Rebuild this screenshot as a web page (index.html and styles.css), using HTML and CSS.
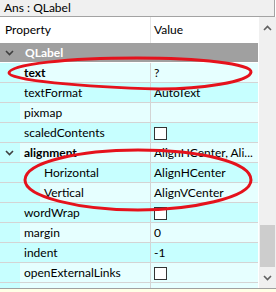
FILE: index.html
```html
<!DOCTYPE html>
<html>
<head>
<meta charset="utf-8">
<link rel="stylesheet" href="styles.css">
</head>
<body>
<div class="app">
  <div class="title">Ans : QLabel</div>
  <div class="main">
    <div class="view">
      <div class="header">
        <div class="hcell hprop">Property</div>
        <div class="hcell hval">Value</div>
      </div>
      <div class="group">
        <svg class="chev gchev" width="9" height="6" viewBox="0 0 9 6"><path d="M1 1 L4.5 4.5 L8 1" fill="none" stroke="#3f3f3f" stroke-width="1.6"/></svg>
        <span class="gname">QLabel</span>
      </div>
      <div class="row light"><div class="prop"><span class="branch b1"></span><span class="name bold">text</span></div><div class="val">?</div></div>
      <div class="row dark"><div class="prop"><span class="branch b1"></span><span class="name">textFormat</span></div><div class="val">AutoText</div></div>
      <div class="row light"><div class="prop"><span class="branch b1"></span><span class="name">pixmap</span></div><div class="val"></div></div>
      <div class="row dark"><div class="prop"><span class="branch b1"></span><span class="name">scaledContents</span></div><div class="val"><span class="check"></span></div></div>
      <div class="row light"><div class="prop"><span class="branch b1"><svg class="chev" width="9" height="6" viewBox="0 0 9 6"><path d="M1 1 L4.5 4.5 L8 1" fill="none" stroke="#404040" stroke-width="1.6"/></svg></span><span class="name bold">alignment</span></div><div class="val">AlignHCenter, Ali...</div></div>
      <div class="row dark"><div class="prop"><span class="branch b2"></span><span class="name">Horizontal</span></div><div class="val">AlignHCenter</div></div>
      <div class="row light"><div class="prop"><span class="branch b2"></span><span class="name">Vertical</span></div><div class="val">AlignVCenter</div></div>
      <div class="row dark"><div class="prop"><span class="branch b1"></span><span class="name">wordWrap</span></div><div class="val"><span class="check"></span></div></div>
      <div class="row light"><div class="prop"><span class="branch b1"></span><span class="name">margin</span></div><div class="val">0</div></div>
      <div class="row dark"><div class="prop"><span class="branch b1"></span><span class="name">indent</span></div><div class="val">-1</div></div>
      <div class="row light"><div class="prop"><span class="branch b1"></span><span class="name">openExternalLinks</span></div><div class="val"><span class="check"></span></div></div>
      <div class="row light"><div class="prop"><span class="branch b1"></span><span class="name"></span></div><div class="val"></div></div>
    </div>
    <div class="scroll">
      <div class="sbtn up"><svg width="9" height="6" viewBox="0 0 9 6"><path d="M1 5 L4.5 1.5 L8 5" fill="none" stroke="#606060" stroke-width="1.6"/></svg></div>
      <div class="track"><div class="thumb"></div></div>
      <div class="sbtn down"><svg width="9" height="6" viewBox="0 0 9 6"><path d="M1 1 L4.5 4.5 L8 1" fill="none" stroke="#606060" stroke-width="1.6"/></svg></div>
    </div>
  </div>
  <div class="bottom"></div>
  <svg class="marks" width="276" height="292" viewBox="0 0 276 292">
    <path d="M137 58 C200 58 252 64 251 72 C250 82 200 89 160 89 C80 87 9 80 9 73 C9 64 70 58 137 58 Z" fill="none" stroke="#e5121c" stroke-width="3"/>
    <path d="M138 150 C200 150 251 162 251 180 C251 198 190 210 138 210 C80 210 25 197 25 180 C25 162 80 150 138 150 Z" fill="none" stroke="#e5121c" stroke-width="3"/>
  </svg>
</div>
</body>
</html>
```
FILE: styles.css
```css
html, body {
  margin: 0;
  padding: 0;
  background: #ffffff;
}
body {
  font-family: Lato, "Liberation Sans", sans-serif;
  font-size: 12px;
  color: #000000;
}
.app {
  position: relative;
  width: 276px;
  height: 292px;
  overflow: hidden;
}
.title {
  box-sizing: border-box;
  width: 275px;
  height: 17px;
  background: #f0f0f0;
  border-bottom: 1px solid #a3a3a3;
  border-right: 1px solid #a3a3a3;
  padding-left: 4px;
  line-height: 16px;
}
.main {
  display: flex;
  height: 271px;
}
.view {
  width: 258px;
  border-right: 1px solid #ffffff;
  overflow: hidden;
  display: flex;
  flex-direction: column;
}
.header {
  display: flex;
  height: 26px;
  flex: none;
  background: #ffffff;
}
.hcell {
  line-height: 26px;
}
.hprop {
  box-sizing: border-box;
  width: 151px;
  padding-left: 5px;
  border-right: 1px solid #e5e5e5;
}
.hval {
  padding-left: 3px;
}
.group {
  display: flex;
  align-items: center;
  flex: none;
  height: 19px;
  background: #a0a0a0;
  border-bottom: 1px solid #ffffff;
}
.gchev {
  margin-left: 5px;
}
.gname {
  margin-left: 11px;
  color: #ffffff;
  font-weight: bold;
}
.row {
  display: flex;
  flex: none;
  height: 19px;
  border-bottom: 1px solid #d4d4d4;
}
.light { background: #e6ffff; }
.dark { background: #c7ffff; }
.prop {
  box-sizing: border-box;
  width: 151px;
  display: flex;
  border-right: 1px solid #d4d4d4;
}
.branch {
  flex: none;
  background: #c7ffff;
  display: flex;
  align-items: center;
}
.b1 { width: 20px; }
.b2 { width: 40px; }
.chev {
  margin-left: 5px;
}
.name {
  padding-left: 4px;
  line-height: 19px;
  white-space: nowrap;
}
.bold { font-weight: bold; }
.val {
  flex: 1;
  padding-left: 3px;
  line-height: 19px;
  white-space: nowrap;
}
.check {
  display: block;
  box-sizing: border-box;
  width: 13px;
  height: 13px;
  margin-top: 4px;
  background: #ffffff;
  border: 1px solid #333333;
}
.scroll {
  width: 17px;
  background: #f0f0f0;
  display: flex;
  flex-direction: column;
}
.sbtn {
  height: 20px;
  flex: none;
  display: flex;
  justify-content: center;
}
.sbtn.up { align-items: flex-end; height: 14px; }
.sbtn.down { align-items: center; height: 20px; }
.track {
  flex: 1;
  display: flex;
  flex-direction: column;
  justify-content: flex-end;
}
.thumb {
  height: 42px;
  margin: 0 1px 1px 1px;
  background: #cdcdcd;
}
.bottom {
  height: 3px;
  border-top: 1px solid #a0a0a0;
  background: #ffffe6;
}
.marks {
  position: absolute;
  left: 0;
  top: 0;
  pointer-events: none;
}
```
